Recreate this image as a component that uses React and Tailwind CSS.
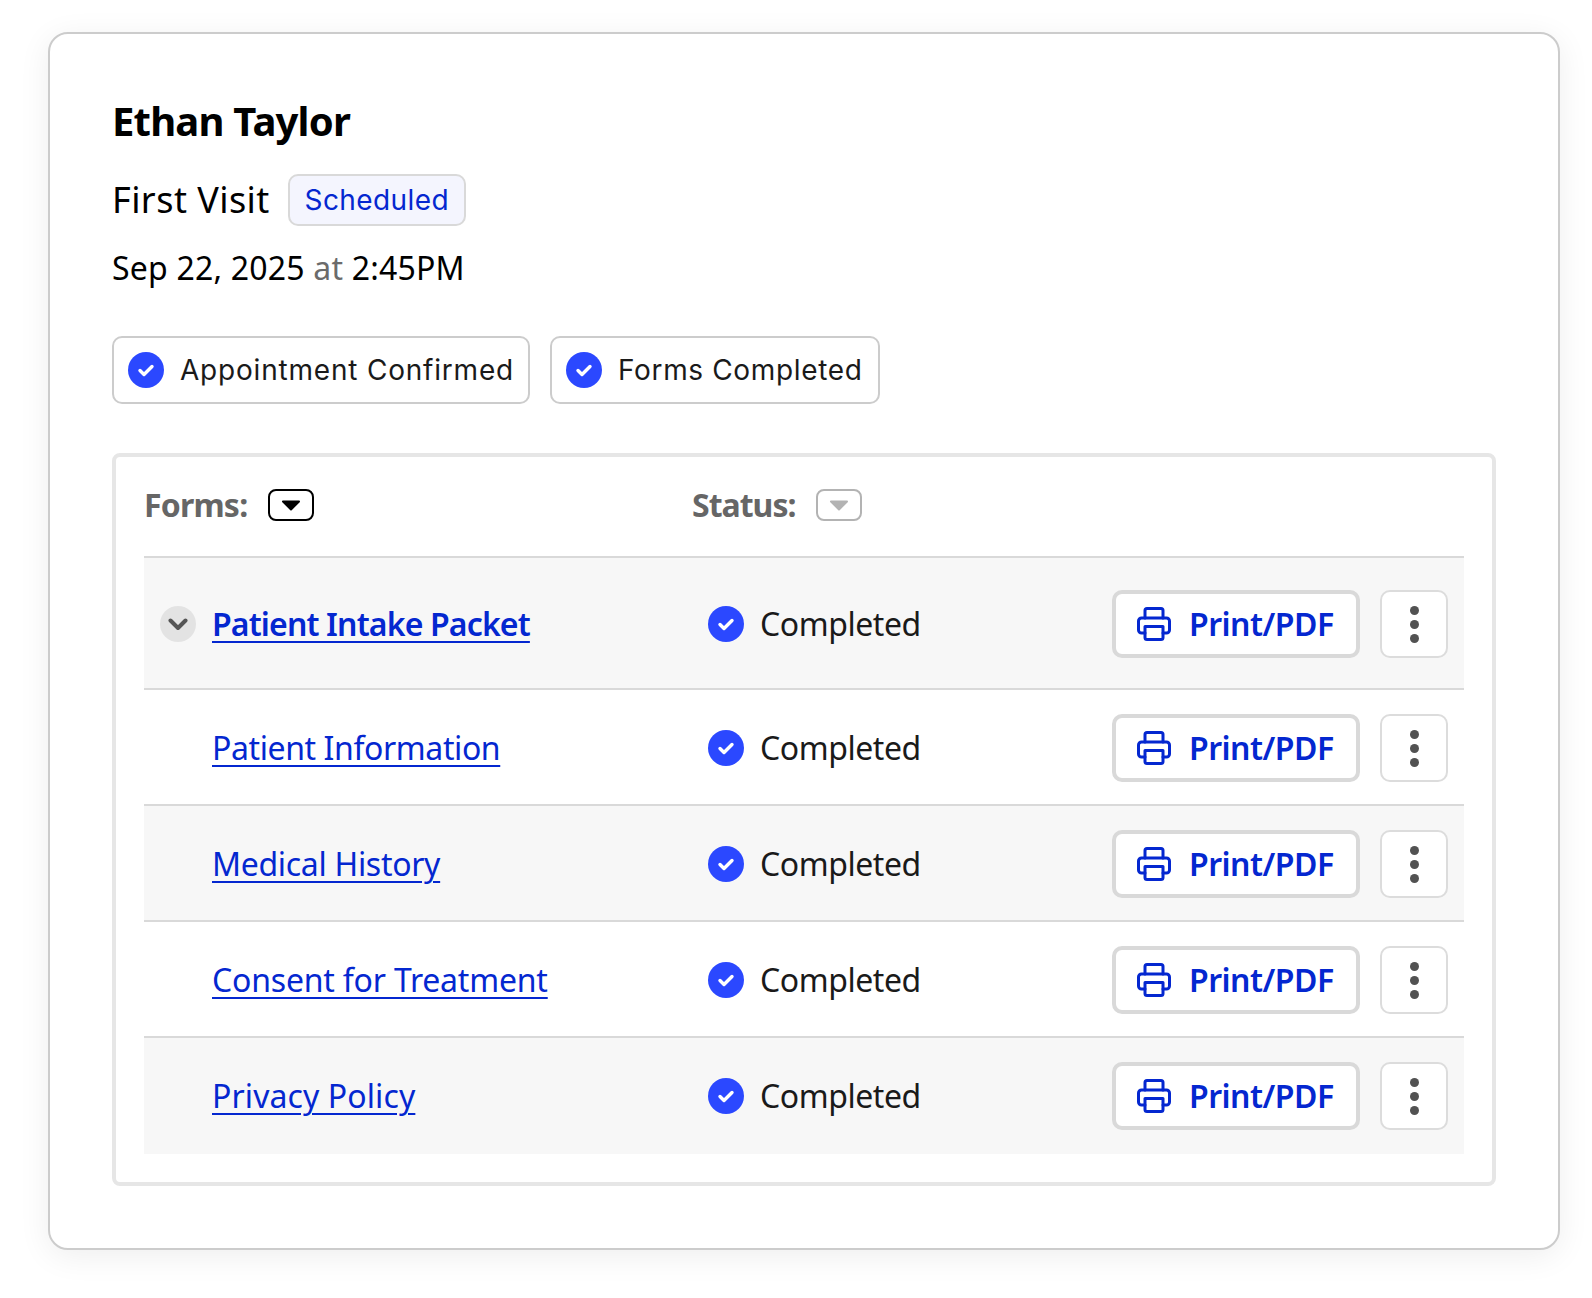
import React from "react";

const main = { fontFamily: '"Noto Sans", sans-serif' };
const alt = { fontFamily: 'Inter, sans-serif' };

function Check() {
  return (
    <svg width="36" height="36" viewBox="0 0 36 36" className="shrink-0">
      <circle cx="18" cy="18" r="18" fill="#2b48ff" />
      <path d="M12 18.5 L16 22.5 L24 14.5" fill="none" stroke="#fff" strokeWidth="3.4" strokeLinecap="round" strokeLinejoin="round" />
    </svg>
  );
}

function Printer() {
  return (
    <svg width="34" height="34" viewBox="0 0 34 34" fill="none" stroke="#0427d0" strokeWidth="3" strokeLinejoin="round" strokeLinecap="round" className="shrink-0">
      <path d="M8 11V3.5a2 2 0 0 1 2-2h14a2 2 0 0 1 2 2V11" />
      <path d="M8 26H4.5a3 3 0 0 1-3-3V14a3 3 0 0 1 3-3h25a3 3 0 0 1 3 3v9a3 3 0 0 1-3 3H26" />
      <path d="M8 19.5h18v11a2 2 0 0 1-2 2H10a2 2 0 0 1-2-2z" />
    </svg>
  );
}

function Tri({ color }) {
  return (
    <svg width="20" height="11" viewBox="0 0 20 11">
      <path d="M2 1.5 H18 L10 9.5 Z" fill={color} stroke={color} strokeWidth="2" strokeLinejoin="round" />
    </svg>
  );
}

function Row({ name, track, first, last, shaded }) {
  return (
    <div className={`flex items-center border-t-2 border-[#d9d9d9] ${first ? "pt-8 pb-[30px]" : last ? "pt-6 pb-6" : "pt-6 pb-[22px]"} ${shaded ? "bg-[#f7f7f7]" : ""}`}>
      <div className="flex w-[548px] items-center gap-4 pl-4">
        {first ? (
          <span className="flex h-9 w-9 items-center justify-center rounded-full bg-[#e3e3e3]">
            <svg width="20" height="13" viewBox="0 0 20 13" fill="none" stroke="#555" strokeWidth="4" strokeLinecap="round" strokeLinejoin="round">
              <path d="M2.5 2.5 L10 10 L17.5 2.5" />
            </svg>
          </span>
        ) : (
          <span className="w-9" />
        )}
        <a className={`text-[32px] leading-[40px] text-[#0427d0] underline decoration-2 underline-offset-[5px] ${first ? "font-semibold" : ""} ${track}`}>
          {name}
        </a>
      </div>
      <div className="flex items-center gap-4 pl-4">
        <Check />
        <span className="text-[32px] leading-[40px] text-[#1a1a1a] tracking-[-0.45px]">Completed</span>
      </div>
      <div className="ml-auto flex items-center gap-5 pr-4">
        <button className="flex h-[68px] w-[248px] items-center gap-[18px] rounded-[10px] border-4 border-[#d9d9d9] bg-white pl-[21px]">
          <Printer />
          <span className="text-[32px] font-semibold text-[#0427d0] tracking-[-0.5px]">Print/PDF</span>
        </button>
        <button className="flex h-[68px] w-[68px] flex-col items-center justify-center gap-[5px] rounded-[10px] border-2 border-[#dcdcdc] bg-white">
          <span className="h-[9px] w-[9px] rounded-full bg-[#525252]" />
          <span className="h-[9px] w-[9px] rounded-full bg-[#525252]" />
          <span className="h-[9px] w-[9px] rounded-full bg-[#525252]" />
        </button>
      </div>
    </div>
  );
}

function Chip({ children, w, track }) {
  return (
    <div className={`flex h-[68px] ${w} items-center gap-4 rounded-[10px] border-2 border-[#cccccc] bg-white pl-[14px]`}>
      <Check />
      <span style={alt} className={`text-[28px] text-[#1a1a1a] ${track}`}>{children}</span>
    </div>
  );
}

export default function App() {
  return (
    <div style={main} className="min-h-[1298px] bg-white pt-8 pr-8 pb-12 pl-12 text-black">
      <div className="flex h-[1218px] flex-col rounded-[20px] border-2 border-[#cccccc] bg-white pt-[63px] pr-[62px] pl-[62px] shadow-[0_6px_32px_rgba(0,0,0,0.07)]">
        <h1 className="text-[40px] leading-[48px] font-bold tracking-[-0.8px]">Ethan Taylor</h1>
        <div className="mt-[29px] flex h-[52px] items-center gap-[18px]">
          <span className="text-[36px] tracking-[0.45px]">First Visit</span>
          <span style={alt} className="flex h-[52px] w-[178px] items-center justify-center rounded-[10px] border-2 border-[#d9d9d9] bg-[#f4f5fe] text-[28px] text-[#0427d0] tracking-[0.4px]">Scheduled</span>
        </div>
        <p className="mt-[22px] text-[32px] leading-[40px] tracking-[0.2px]">
          Sep 22, 2025 <span className="text-[#6b6b6b]">at</span> 2:45PM
        </p>
        <div className="mt-[48px] flex gap-5">
          <Chip w="w-[418px]" track="tracking-[0.8px]">Appointment Confirmed</Chip>
          <Chip w="w-[330px]" track="tracking-[0.65px]">Forms Completed</Chip>
        </div>
        <div className="mt-[49px] rounded-[8px] border-4 border-[#e6e6e6] px-7 pt-8 pb-7">
          <div className="flex h-[67px] items-start">
            <div className="flex w-[548px] items-center gap-[21px]">
              <span className="text-[32px] leading-8 font-bold text-[#666666] tracking-[-0.8px]">Forms:</span>
              <span className="flex h-8 w-[46px] items-center justify-center rounded-lg border-2 border-black">
                <Tri color="#000" />
              </span>
            </div>
            <div className="flex items-center gap-[21px]">
              <span className="text-[32px] leading-8 font-bold text-[#666666] tracking-[-1px]">Status:</span>
              <span className="flex h-8 w-[46px] items-center justify-center rounded-lg border-2 border-[#b3b3b3]">
                <Tri color="#b3b3b3" />
              </span>
            </div>
          </div>
          <Row name="Patient Intake Packet" track="tracking-[-0.85px]" first shaded />
          <Row name="Patient Information" track="tracking-[-0.4px]" />
          <Row name="Medical History" track="tracking-[-0.3px]" shaded />
          <Row name="Consent for Treatment" track="tracking-[-0.2px]" />
          <Row name="Privacy Policy" track="tracking-[0.1px]" last shaded />
        </div>
      </div>
    </div>
  );
}
